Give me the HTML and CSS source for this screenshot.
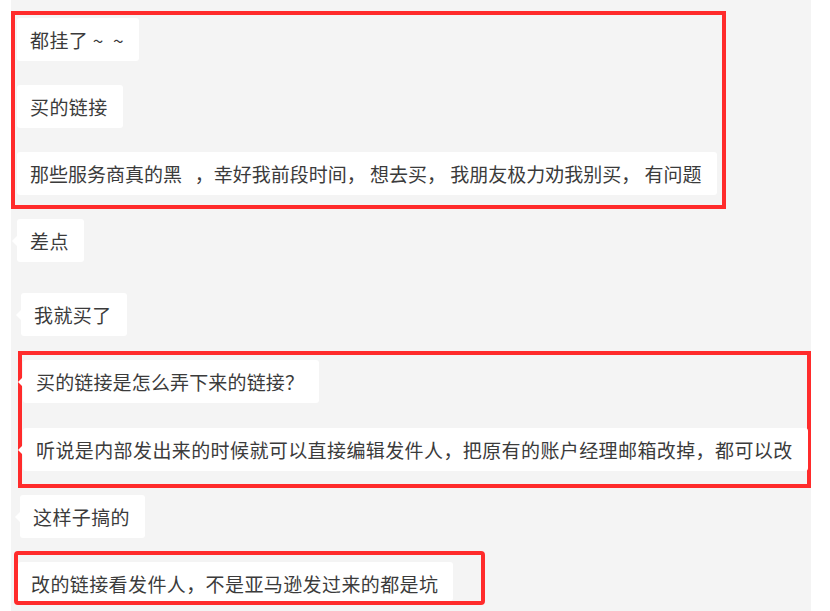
FILE: index.html
```html
<!DOCTYPE html>
<html lang="zh-CN">
<head>
<meta charset="utf-8">
<title>chat</title>
<link rel="stylesheet" href="styles.css">
</head>
<body>
<div class="page">
  <div class="box box1">
    <div class="msg m1">都挂了&nbsp;~&nbsp;&nbsp;~</div>
    <div class="msg m2">买的链接</div>
    <div class="msg m3">那些服务商真的黑&nbsp;&nbsp;&nbsp;，幸好我前段时间， 想去买， 我朋友极力劝我别买， 有问题</div>
  </div>
  <div class="msg tail m4">差点</div>
  <div class="msg tail m5">我就买了</div>
  <div class="box box2">
    <div class="msg tail m6">买的链接是怎么弄下来的链接？</div>
    <div class="msg tail m7">听说是内部发出来的时候就可以直接编辑发件人，把原有的账户经理邮箱改掉，都可以改</div>
  </div>
  <div class="msg tail m8">这样子搞的</div>
  <div class="box box3">
    <div class="msg m9">改的链接看发件人，不是亚马逊发过来的都是坑</div>
  </div>
</div>
</body>
</html>
```
FILE: styles.css
```css
html, body {
  margin: 0;
  padding: 0;
  background: #ffffff;
}
.page {
  margin-left: 11px;
  width: 800px;
  height: 611px;
  background: #f4f4f4;
  overflow: hidden;
  padding-top: 11px;
  box-sizing: border-box;
  display: flex;
  flex-direction: column;
  align-items: flex-start;
  font-family: "Noto Sans CJK SC", "Noto Sans", sans-serif;
  font-size: 19px;
  letter-spacing: 0.4px;
  color: #3b3b3b;
}
.box {
  border: 4px solid #ff2b2b;
  box-sizing: border-box;
  display: flex;
  flex-direction: column;
  align-items: flex-start;
}
.msg {
  position: relative;
  background: #ffffff;
  border-radius: 3px;
  line-height: 21px;
  padding: 11px 15px 11px 13px;
  white-space: nowrap;
}
.tail::before {
  content: "";
  position: absolute;
  left: -5px;
  top: 17px;
  border-top: 5px solid transparent;
  border-bottom: 5px solid transparent;
  border-right: 5px solid #ffffff;
}
.box1 {
  width: 715px;
  padding: 3px 0 10px 2px;
  gap: 24px;
}
.m3 { letter-spacing: 0; }
.m6 { letter-spacing: 0.15px; }
.m4 { margin-left: 6px; margin-top: 10px; }
.m5 { margin-left: 10px; margin-top: 31px; }
.box2 {
  margin-left: 7px;
  margin-top: 15px;
  width: 793px;
  padding: 5px 0 13px 1px;
  gap: 25px;
}
.m8 { margin-left: 9px; margin-top: 7px; }
.box3 {
  margin-left: 3px;
  margin-top: 13px;
  width: 471px;
  border-radius: 4px;
  padding: 7px 0 0 0;
}
.m9 { padding-bottom: 7px; }
```
